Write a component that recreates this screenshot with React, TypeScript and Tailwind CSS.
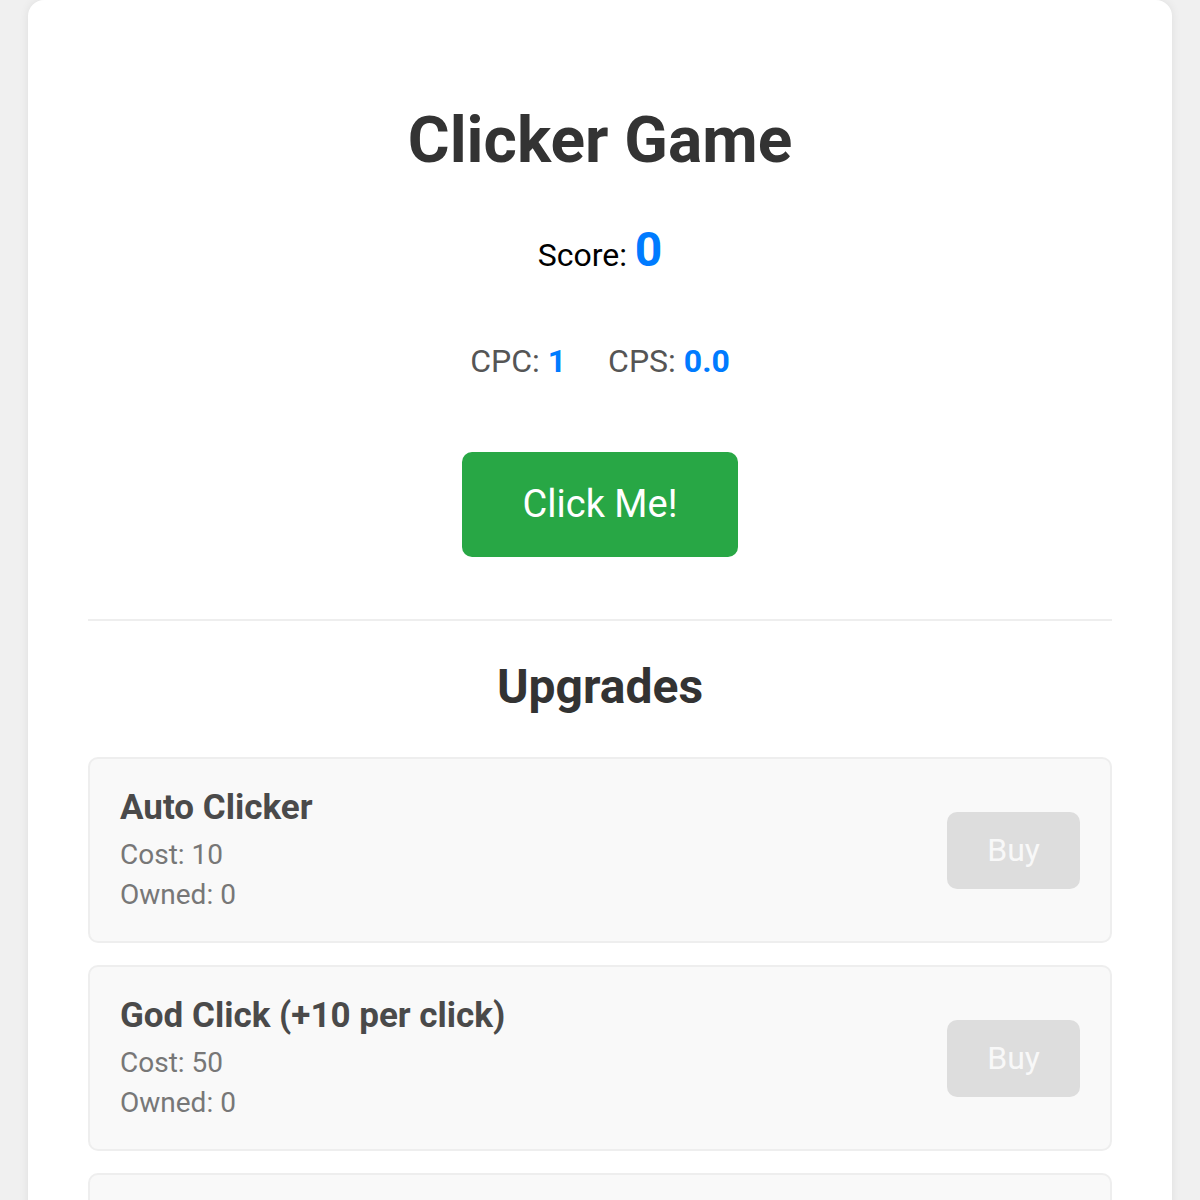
import React from 'react';

const upgrades = [
  { name: 'Auto Clicker', cost: 10, owned: 0 },
  { name: 'God Click (+10 per click)', cost: 50, owned: 0 },
  { name: 'Click Farm', cost: 200, owned: 0 },
];

const App = () => {
  return (
    <div className="min-h-screen bg-[#f0f0f0] px-[28px] font-['Roboto',sans-serif]">
      <div className="rounded-[16px] bg-white px-[60px] pt-[102px] pb-[60px] shadow-[0_0_10px_rgba(0,0,0,0.08)]">
        <h1 className="text-center text-[64px] font-bold leading-[77px] text-[#333]">Clicker Game</h1>

        {/* Score */}
        <p className="mt-[43px] text-center leading-[56px] text-black">
          <span className="text-[32px]">Score: </span>
          <span className="text-[48px] font-bold text-[#007bff]">0</span>
        </p>

        {/* Stats */}
        <div className="mt-[53px] flex justify-center gap-[42px] text-[32px] leading-[38px] text-[#555]">
          <span>
            CPC: <span className="font-bold text-[#007bff]">1</span>
          </span>
          <span>
            CPS: <span className="font-bold text-[#007bff]">0.0</span>
          </span>
        </div>

        <div className="mt-[72px] flex justify-center">
          <button className="rounded-[10px] bg-[#28a745] px-[61px] py-[30px] text-[38px] leading-[45px] text-white">
            Click Me!
          </button>
        </div>

        <div className="mt-[62px] h-[2px] bg-[#eee]" />

        <h2 className="mt-[38px] text-center text-[48px] font-bold leading-[56px] text-[#333]">Upgrades</h2>

        <div className="mt-[42px] flex flex-col gap-[22px]">
          {upgrades.map((u) => (
            <div
              key={u.name}
              className="flex items-center justify-between rounded-[10px] border-2 border-[#eee] bg-[#f9f9f9] pt-[28px] pb-[26px] pl-[30px] pr-[30px]"
            >
              <div>
                <div className="text-[35px] font-bold leading-[42px] text-[#4a4a4a]">{u.name}</div>
                <div className="mt-[6px] text-[28px] leading-[40px] text-[#777]">Cost: {u.cost}</div>
                <div className="text-[28px] leading-[40px] text-[#777]">Owned: {u.owned}</div>
              </div>
              <button className="-mt-[2px] rounded-[10px] bg-[#ddd] px-[40px] py-[20px] text-[32px] leading-[37px] text-[#f8f8f8]">
                Buy
              </button>
            </div>
          ))}
        </div>
      </div>
    </div>
  );
};

export default App;
